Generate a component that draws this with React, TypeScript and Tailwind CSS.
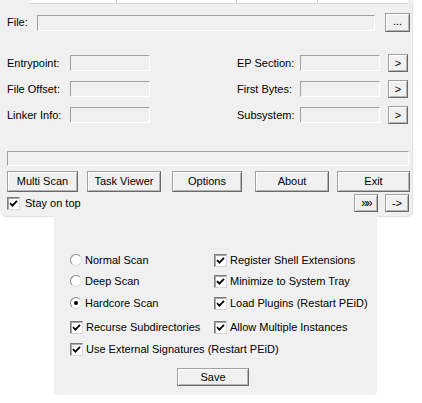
import React from "react";

const btn =
  "flex items-center justify-center border border-t-[#a0a0a0] border-l-[#a0a0a0] border-b-[#696969] border-r-[#696969] bg-[#f0f0f0] shadow-[inset_1px_1px_0_#ffffff,inset_-1px_-1px_0_#b4b4b4] leading-none text-black";

function Field({ w, h = 16 }: { w: number; h?: number }) {
  return (
    <div
      className="border border-t-[#a0a0a0] border-l-[#a0a0a0] border-b-[#ffffff] border-r-[#ffffff] bg-[#f0f0f0] shrink-0"
      style={{ width: w, height: h }}
    />
  );
}

function Check() {
  return (
    <div className="w-[13px] h-[13px] shrink-0 border border-t-[#7d7d7d] border-l-[#7d7d7d] border-b-[#d8d8d8] border-r-[#d8d8d8] bg-white shadow-[inset_1px_1px_0_#a8a8a8] flex items-center justify-center">
      <svg width="9" height="9" viewBox="0 0 9 9">
        <path d="M1 4.2 L3.4 6.6 L8 1.8" fill="none" stroke="#000" strokeWidth="1.8" />
      </svg>
    </div>
  );
}

function Radio({ on }: { on?: boolean }) {
  return (
    <div className="w-[12px] h-[12px] shrink-0 rounded-full border border-t-[#8a8a8a] border-l-[#8a8a8a] border-b-[#dcdcdc] border-r-[#dcdcdc] bg-white flex items-center justify-center">
      {on && <div className="w-[4px] h-[4px] rounded-full bg-black" />}
    </div>
  );
}

function Row({ label, right }: { label: string; right: string }) {
  return (
    <div className="flex items-center h-[18px] pl-[7px]">
      <div className="w-[63px] shrink-0">{label}</div>
      <Field w={80} />
      <div className="w-[87px] shrink-0" />
      <div className="w-[63px] shrink-0">{right}</div>
      <Field w={80} />
      <div className={btn + " ml-[8px] w-[20px] h-[18px] shrink-0"}>&gt;</div>
    </div>
  );
}

function Opt({ children, mark }: { children: React.ReactNode; mark: React.ReactNode }) {
  return (
    <div className="flex items-center h-[20px]">
      {mark}
      <span className="ml-[3px]">{children}</span>
    </div>
  );
}

export default function App() {
  return (
    <div className="w-[422px] h-[403px] bg-white overflow-hidden text-[11px] text-black font-['Liberation_Sans',Arial,sans-serif]">
      <div className="w-[412px] h-[216px] bg-[#f0f0f0] rounded-b-[5px] shadow-[1px_1px_1px_rgba(0,0,0,0.12)] flex flex-col">
        <div className="flex h-[4px] shrink-0">
          <div className="w-[29px]" />
          <div className="flex-1 mr-[4px] bg-white border-b border-[#d8d8d8] flex">
            <div className="w-[88px] border-r border-[#d0d0d0]" />
            <div className="w-[120px] border-r border-[#d0d0d0]" />
            <div className="w-[81px] border-r border-[#d0d0d0]" />
          </div>
        </div>

        <div className="flex items-center pl-[7px] mt-[9px] h-[19px]">
          <div className="w-[30px] shrink-0">File:</div>
          <Field w={338} />
          <div className={btn + " ml-[10px] w-[25px] h-[19px] items-end pb-[4px]"}>...</div>
        </div>

        <div className="flex flex-col gap-[8px] mt-[22px]">
          <Row label="Entrypoint:" right="EP Section:" />
          <Row label="File Offset:" right="First Bytes:" />
          <Row label="Linker Info:" right="Subsystem:" />
        </div>

        <div className="ml-[7px] mt-[27px]">
          <Field w={402} h={15} />
        </div>

        <div className="flex mt-[5px] h-[21px]">
          <div className={btn + " ml-[7px] w-[71px]"}>Multi Scan</div>
          <div className={btn + " ml-[9px] w-[74px]"}>Task Viewer</div>
          <div className={btn + " ml-[11px] w-[70px]"}>Options</div>
          <div className={btn + " ml-[13px] w-[74px]"}>About</div>
          <div className={btn + " ml-[8px] w-[73px]"}>Exit</div>
        </div>

        <div className="flex items-center mt-[2px] h-[18px]">
          <div className="ml-[7px]">
            <Check />
          </div>
          <span className="ml-[5px]">Stay on top</span>
          <div className={btn + " ml-auto w-[24px] h-[18px] text-[#2a46b0] text-[12px] tracking-[-2px] pb-[1px]"}>»»</div>
          <div className={btn + " ml-[7px] mr-[3px] w-[24px] h-[18px]"}>-&gt;</div>
        </div>
      </div>

      <div className="ml-[54px] w-[323px] h-[178px] bg-[#f0f0f0] rounded-b-[4px] shadow-[0_1px_1px_rgba(0,0,0,0.06)] pt-[34px] pl-[16px] flex flex-col">
        <div className="flex">
          <div className="w-[144px] shrink-0">
            <Opt mark={<Radio />}>Normal Scan</Opt>
          </div>
          <Opt mark={<Check />}>Register Shell Extensions</Opt>
        </div>
        <div className="flex mt-[1px]">
          <div className="w-[144px] shrink-0">
            <Opt mark={<Radio />}>Deep Scan</Opt>
          </div>
          <Opt mark={<Check />}>Minimize to System Tray</Opt>
        </div>
        <div className="flex mt-[2px]">
          <div className="w-[144px] shrink-0">
            <Opt mark={<Radio on />}>Hardcore Scan</Opt>
          </div>
          <Opt mark={<Check />}>Load Plugins (Restart PEiD)</Opt>
        </div>
        <div className="flex mt-[4px]">
          <div className="w-[144px] shrink-0">
            <Opt mark={<Check />}>Recurse Subdirectories</Opt>
          </div>
          <Opt mark={<Check />}>Allow Multiple Instances</Opt>
        </div>
        <div className="flex mt-[2px]">
          <Opt mark={<Check />}>Use External Signatures (Restart PEiD)</Opt>
        </div>
        <div className={btn + " mt-[9px] ml-[107px] w-[72px] h-[18px]"}>Save</div>
      </div>
    </div>
  );
}
